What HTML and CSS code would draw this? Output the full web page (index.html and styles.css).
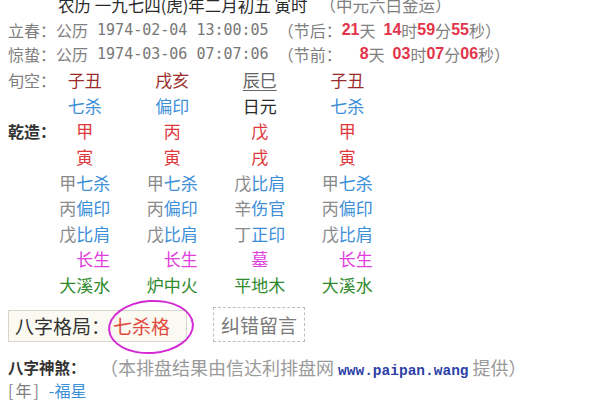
FILE: index.html
```html
<!DOCTYPE html>
<html lang="zh">
<head>
<meta charset="utf-8">
<link rel="stylesheet" href="styles.css">
</head>
<body>
<div class="page">
  <div class="row r0"><span class="dark">农历 一九七四(虎)年二月初五 寅时</span><span class="gray sp">（中元六白金运）</span></div>
  <div class="row r1"><span class="gray">立春：公历</span><span class="mono"> 1974-02-04 13:00:05 </span><span class="gray">（节后：</span><b class="num">21</b><span class="gray">天</span><b class="num sp8">14</b><span class="gray">时</span><b class="num">59</b><span class="gray">分</span><b class="num">55</b><span class="gray">秒）</span></div>
  <div class="row r2"><span class="gray">惊蛰：公历</span><span class="mono"> 1974-03-06 07:07:06 </span><span class="gray">（节前：</span><b class="num pad">8</b><span class="gray">天</span><b class="num sp8">03</b><span class="gray">时</span><b class="num">07</b><span class="gray">分</span><b class="num">06</b><span class="gray">秒）</span></div>

  <div class="grid">
    <div class="lbl gray">旬空：</div>
    <div class="c drk">子丑</div><div class="c drk">戌亥</div><div class="c ul">辰巳</div><div class="c drk">子丑</div>

    <div class="lbl"></div>
    <div class="c blue">七杀</div><div class="c blue">偏印</div><div class="c dark">日元</div><div class="c blue">七杀</div>

    <div class="lbl bold">乾造：</div>
    <div class="c red">甲</div><div class="c red">丙</div><div class="c red">戊</div><div class="c red">甲</div>

    <div class="lbl"></div>
    <div class="c red">寅</div><div class="c red">寅</div><div class="c red">戌</div><div class="c red">寅</div>

    <div class="lbl"></div>
    <div class="c"><span class="g2">甲</span><span class="blue">七杀</span></div>
    <div class="c"><span class="g2">甲</span><span class="blue">七杀</span></div>
    <div class="c"><span class="g2">戊</span><span class="blue">比肩</span></div>
    <div class="c"><span class="g2">甲</span><span class="blue">七杀</span></div>

    <div class="lbl"></div>
    <div class="c"><span class="g2">丙</span><span class="blue">偏印</span></div>
    <div class="c"><span class="g2">丙</span><span class="blue">偏印</span></div>
    <div class="c"><span class="g2">辛</span><span class="blue">伤官</span></div>
    <div class="c"><span class="g2">丙</span><span class="blue">偏印</span></div>

    <div class="lbl"></div>
    <div class="c"><span class="g2">戊</span><span class="blue">比肩</span></div>
    <div class="c"><span class="g2">戊</span><span class="blue">比肩</span></div>
    <div class="c"><span class="g2">丁</span><span class="blue">正印</span></div>
    <div class="c"><span class="g2">戊</span><span class="blue">比肩</span></div>

    <div class="lbl"></div>
    <div class="c"><span class="mag sh">长生</span></div>
    <div class="c"><span class="mag sh">长生</span></div>
    <div class="c"><span class="mag">墓</span></div>
    <div class="c"><span class="mag sh">长生</span></div>

    <div class="lbl"></div>
    <div class="c green">大溪水</div><div class="c green">炉中火</div><div class="c green">平地木</div><div class="c green">大溪水</div>
  </div>

  <div class="boxes">
    <div class="gebox">八字格局：<span class="ge">七杀格<span class="ring"></span></span></div>
    <div class="fix">纠错留言</div>
  </div>

  <div class="row r13"><b class="bold ss">八字神煞：</b><span class="note">（本排盘结果由信达利排盘网 <b class="url">www.paipan.wang</b> 提供）</span></div>
  <div class="row r14"><span class="gray yr">[年]</span><span class="blue fx">-福星</span></div>
</div>
</body>
</html>
```

FILE: styles.css
```css
html, body {
  margin: 0;
  padding: 0;
  background: #ffffff;
}
body {
  font-family: "Noto Sans CJK SC", "DejaVu Sans", sans-serif;
  font-size: 16px;
  color: #333;
  overflow: hidden;
  width: 600px;
  height: 400px;
}
.page {
  padding-left: 8px;
  margin-top: -7px;
}
.row {
  display: flex;
  align-items: center;
  white-space: pre;
}
.r0 {
  height: 24px;
  padding-left: 50px;
  font-size: 16.5px;
}
.sp { margin-left: 12px; }
.r1 { height: 25px; }
.r2 { height: 24px; margin-bottom: 1px; }
.dark { color: #2a2a2a; }
.gray { color: #7f7f7f; }
.mono {
  font-family: "DejaVu Sans Mono", monospace;
  font-size: 15px;
  color: #777;
}
.num {
  font-family: "Liberation Sans", sans-serif;
  font-weight: bold;
  font-size: 16px;
  color: #e4344a;
}
.num.pad { padding-left: 18px; }
.num.sp8 { margin-left: 8px; }

.grid {
  display: grid;
  grid-template-columns: 33px repeat(4, 87.5px);
  grid-auto-rows: 25.6px;
  font-size: 17px;
  align-items: center;
}
.lbl {
  white-space: nowrap;
  color: #7f7f7f;
  font-size: 16px;
}
.lbl.bold { color: #333; font-weight: bold; }
.c {
  text-align: center;
  white-space: nowrap;
}
.drk { color: #9a2b2b; }
.ul { color: #666; text-decoration: underline; text-underline-offset: 3px; }
.blue { color: #3d8fd8; }
.red { color: #e0383c; }
.g2 { color: #8a8a8a; }
.mag { color: #e040dc; }
.sh { padding-left: 17px; }
.green { color: #2f8a2c; }

.boxes {
  display: flex;
  align-items: flex-end;
  gap: 26px;
  margin-top: 10px;
  height: 35px;
}
.gebox {
  height: 30px;
  line-height: 30px;
  border: 1px solid #d8d6cc;
  background: #fbfaf2;
  padding: 0 16px 0 6px;
  font-size: 19px;
  color: #333;
}
.ge {
  position: relative;
  color: #e04a3c;
  margin-left: 3px;
}
.ring {
  position: absolute;
  left: -5px;
  top: -12px;
  width: 86px;
  height: 54px;
  border: 2.5px solid #d42ad4;
  border-radius: 50%;
  box-sizing: border-box;
  transform: rotate(-4deg);
}
.fix {
  height: 33px;
  line-height: 33px;
  border: 1px dashed #bdbdbd;
  padding: 0 7px;
  font-size: 19px;
  color: #7a7a7a;
}
.r13 {
  height: 24px;
  margin-top: 13px;
}
.ss { font-size: 15.5px; color: #333; width: 92px; }
.note { color: #9a9a9a; font-size: 18px; }
.url {
  font-family: "Liberation Mono", monospace;
  font-size: 14.5px;
  color: #2d3fa8;
}
.r14 { height: 22px; font-size: 16px; }
.yr { letter-spacing: 2px; }
.fx { margin-left: 8px; }
```
